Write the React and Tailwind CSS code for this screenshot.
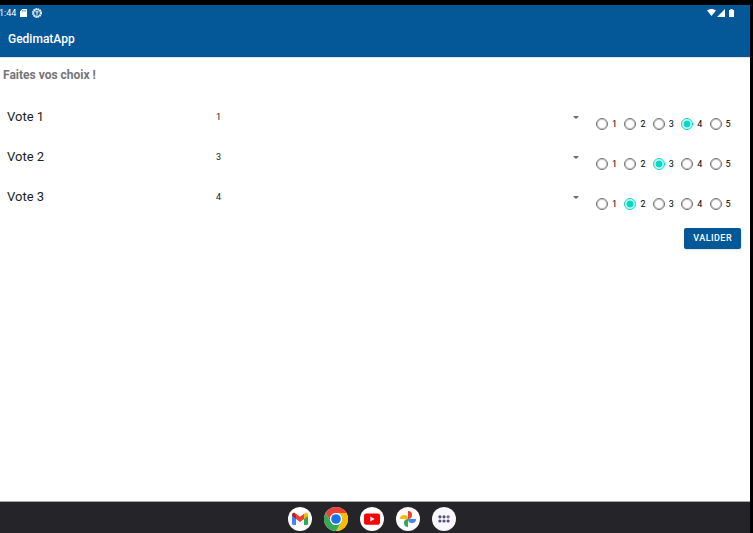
import { useState } from "react";

const CHOICES = [1, 2, 3, 4, 5];

const VOTES = [
  { id: "vote-1", label: "Vote 1", option: "1", rating: 4 },
  { id: "vote-2", label: "Vote 2", option: "3", rating: 3 },
  { id: "vote-3", label: "Vote 3", option: "4", rating: 2 },
];

function StatusBar() {
  return (
    <div className="flex h-4 items-center justify-between pr-4 pb-px text-white">
      <div className="flex items-center gap-[5px]">
        <span className="-ml-px w-4 text-[9px] leading-[14px]">1:44</span>
        <svg viewBox="0 0 7 8" className="h-2 w-[7px]" aria-hidden="true">
          <path d="M2.3 0H6.5Q7 0 7 .5V7.5Q7 8 6.5 8H.5Q0 8 0 7.5V2.3Z" fill="currentColor" />
          <path d="M2.6 1v1.6M4 1v1.6M5.4 1v1.6" stroke="#055898" strokeWidth=".6" />
        </svg>
        <svg viewBox="0 0 10 10" className="h-[10px] w-[10px]" aria-hidden="true">
          <circle cx="5" cy="5" r="4.2" fill="none" stroke="currentColor" strokeWidth="1.4" strokeDasharray="1.6 .6" />
          <circle cx="5" cy="5" r="3.4" fill="none" stroke="currentColor" strokeWidth=".9" />
          <path d="M3.4 3.8h3.2M5 3.6v3.8" stroke="currentColor" strokeWidth="1" />
        </svg>
      </div>
      <div className="flex items-center">
        <svg viewBox="0 0 9 7" className="h-[7px] w-[9px]" aria-hidden="true">
          <path d="M4.5 7 0 1.6C2.6-.5 6.4-.5 9 1.6Z" fill="currentColor" />
        </svg>
        <svg viewBox="0 0 8 8" className="ml-px h-2 w-2" aria-hidden="true">
          <path d="M0 8 8 0V8Z" fill="currentColor" />
        </svg>
        <svg viewBox="0 0 5 8" className="ml-1 h-2 w-[5px]" aria-hidden="true">
          <path d="M1.4 0h2.2v.9H5V8H0V.9h1.4Z" fill="currentColor" />
        </svg>
      </div>
    </div>
  );
}

function VoteRow({ vote }) {
  const [option, setOption] = useState(vote.option);
  const [rating, setRating] = useState(vote.rating);

  return (
    <div className="flex h-10 items-start">
      <label htmlFor={vote.id} className="w-[209px] pl-[7px] text-[13px] leading-[26px] text-[#212121]">
        {vote.label}
      </label>
      <div className="relative mr-4 flex-1">
        <select
          id={vote.id}
          value={option}
          onChange={(e) => setOption(e.target.value)}
          className="block h-7 w-full appearance-none bg-transparent pl-[7px] text-[9px] text-[#212121] outline-none"
        >
          {CHOICES.map((n) => (
            <option key={n} value={n}>
              {n}
            </option>
          ))}
        </select>
        <svg viewBox="0 0 6 3" className="pointer-events-none absolute top-3 right-px h-[3px] w-[6px]" aria-hidden="true">
          <path d="M0 0h6L3 3Z" fill="#666" />
        </svg>
      </div>
      <div role="radiogroup" aria-label={vote.label} className="mr-3 grid h-10 w-[142px] grid-cols-5 items-center">
        {CHOICES.map((n) => (
          <label key={n} className="flex items-center gap-1 text-[9px] leading-3 text-black">
            <input
              type="radio"
              name={vote.id + "-rating"}
              checked={rating === n}
              onChange={() => setRating(n)}
              className="m-0 h-3 w-3 shrink-0 appearance-none rounded-full border border-[#707070] bg-white outline-1 -outline-offset-2 outline-[#70707066] checked:border-[#03dac5] checked:bg-[radial-gradient(circle,#03dac5_3px,#ffffff_4px)] checked:outline-[#03dac544]"
            />
            {n}
          </label>
        ))}
      </div>
    </div>
  );
}

function GmailIcon() {
  return (
    <svg viewBox="0 0 24 24" className="h-6 w-6" aria-hidden="true">
      <circle cx="12" cy="12" r="12" fill="#fff" />
      <path d="M4 8v8.8c0 .7.5 1.2 1.2 1.2H8V11Z" fill="#4285f4" />
      <path d="M20 8v8.8c0 .7-.5 1.2-1.2 1.2H16V11Z" fill="#34a853" />
      <path d="M16 7.2V12l4-3V7.6c0-1.7-1.8-2.5-3.1-1.5Z" fill="#fbbc04" />
      <path d="M4 7.6V9l4 3V7.2l-.9-1.1C5.8 5.1 4 5.9 4 7.6Z" fill="#c5221f" />
      <path d="M8 12V6.8l4 3 4-3V12l-4 3Z" fill="#ea4335" />
    </svg>
  );
}

function ChromeIcon() {
  return (
    <svg viewBox="0 0 24 24" className="h-6 w-6" aria-hidden="true">
      <circle cx="12" cy="12" r="12" fill="#fff" />
      <path d="M1.6 6A12 12 0 0 1 22.4 6H12a6 6 0 0 0-5.2 9Z" fill="#ea4335" />
      <path d="M22.4 6A12 12 0 0 1 12 24l5.2-9A6 6 0 0 0 12 6Z" fill="#fbbc04" />
      <path d="M12 24A12 12 0 0 1 1.6 6l5.2 9a6 6 0 0 0 10.4 0Z" fill="#34a853" />
      <circle cx="12" cy="12" r="6" fill="#fff" />
      <circle cx="12" cy="12" r="4.8" fill="#1a73e8" />
    </svg>
  );
}

function YoutubeIcon() {
  return (
    <svg viewBox="0 0 24 24" className="h-6 w-6" aria-hidden="true">
      <circle cx="12" cy="12" r="12" fill="#fff" />
      <rect x="4" y="6.4" width="16" height="11.4" rx="2.2" fill="#f00" />
      <path d="m10.3 9.6 4.3 2.5-4.3 2.5Z" fill="#fff" />
    </svg>
  );
}

function PhotosIcon() {
  return (
    <svg viewBox="0 0 24 24" className="h-6 w-6" aria-hidden="true">
      <circle cx="12" cy="12" r="12" fill="#fff" />
      <path d="M12 4a4 4 0 0 1 0 8Z" fill="#ea4335" />
      <path d="M20 12a4 4 0 0 1-8 0Z" fill="#4285f4" />
      <path d="M12 20a4 4 0 0 1 0-8Z" fill="#34a853" />
      <path d="M4 12a4 4 0 0 1 8 0Z" fill="#fbbc04" />
    </svg>
  );
}

function AllAppsIcon() {
  return (
    <svg viewBox="0 0 24 24" className="h-6 w-6" aria-hidden="true">
      <circle cx="12" cy="12" r="12" fill="#f8f7fc" />
      <g fill="#50527c">
        <circle cx="7.9" cy="9.8" r="1.6" />
        <circle cx="12" cy="9.8" r="1.6" />
        <circle cx="16.1" cy="9.8" r="1.6" fill="#80648c" />
        <circle cx="7.9" cy="14" r="1.6" />
        <circle cx="12" cy="14" r="1.6" />
        <circle cx="16.1" cy="14" r="1.6" />
      </g>
    </svg>
  );
}

const DOCK = [
  { name: "Gmail", Icon: GmailIcon },
  { name: "Chrome", Icon: ChromeIcon },
  { name: "YouTube", Icon: YoutubeIcon },
  { name: "Photos", Icon: PhotosIcon },
  { name: "Applications", Icon: AllAppsIcon },
];

export default function App() {
  return (
    <div className="flex min-h-screen flex-col bg-black pt-[5px] pr-[3px] font-['Roboto',sans-serif]">
      <header className="bg-[#055898]">
        <StatusBar />
        <h1 className="h-9 pl-2 text-[12px] leading-9 font-medium text-white">GedimatApp</h1>
      </header>

      <main className="flex-1 border-t border-[#e4e4e6] bg-white">
        <h2 className="pt-[7px] pl-[3px] text-[12px] leading-5 font-bold text-[#757575]">Faites vos choix !</h2>
        <form className="mt-[19px]" onSubmit={(e) => e.preventDefault()}>
          {VOTES.map((vote) => (
            <VoteRow key={vote.id} vote={vote} />
          ))}
          <div className="flex justify-end pt-1 pr-[9px]">
            <button
              type="submit"
              className="h-[21px] rounded-[2px] bg-[#055898] px-[9px] pt-px text-[9px] font-medium tracking-wider text-white shadow-sm"
            >
              VALIDER
            </button>
          </div>
        </form>
      </main>

      <nav className="flex h-8 items-center justify-center gap-3 border-t border-[#a8a6aa] bg-[#252429] pt-[3px] pr-[6px]">
        {DOCK.map(({ name, Icon }) => (
          <button key={name} type="button" aria-label={name}>
            <Icon />
          </button>
        ))}
      </nav>
    </div>
  );
}
